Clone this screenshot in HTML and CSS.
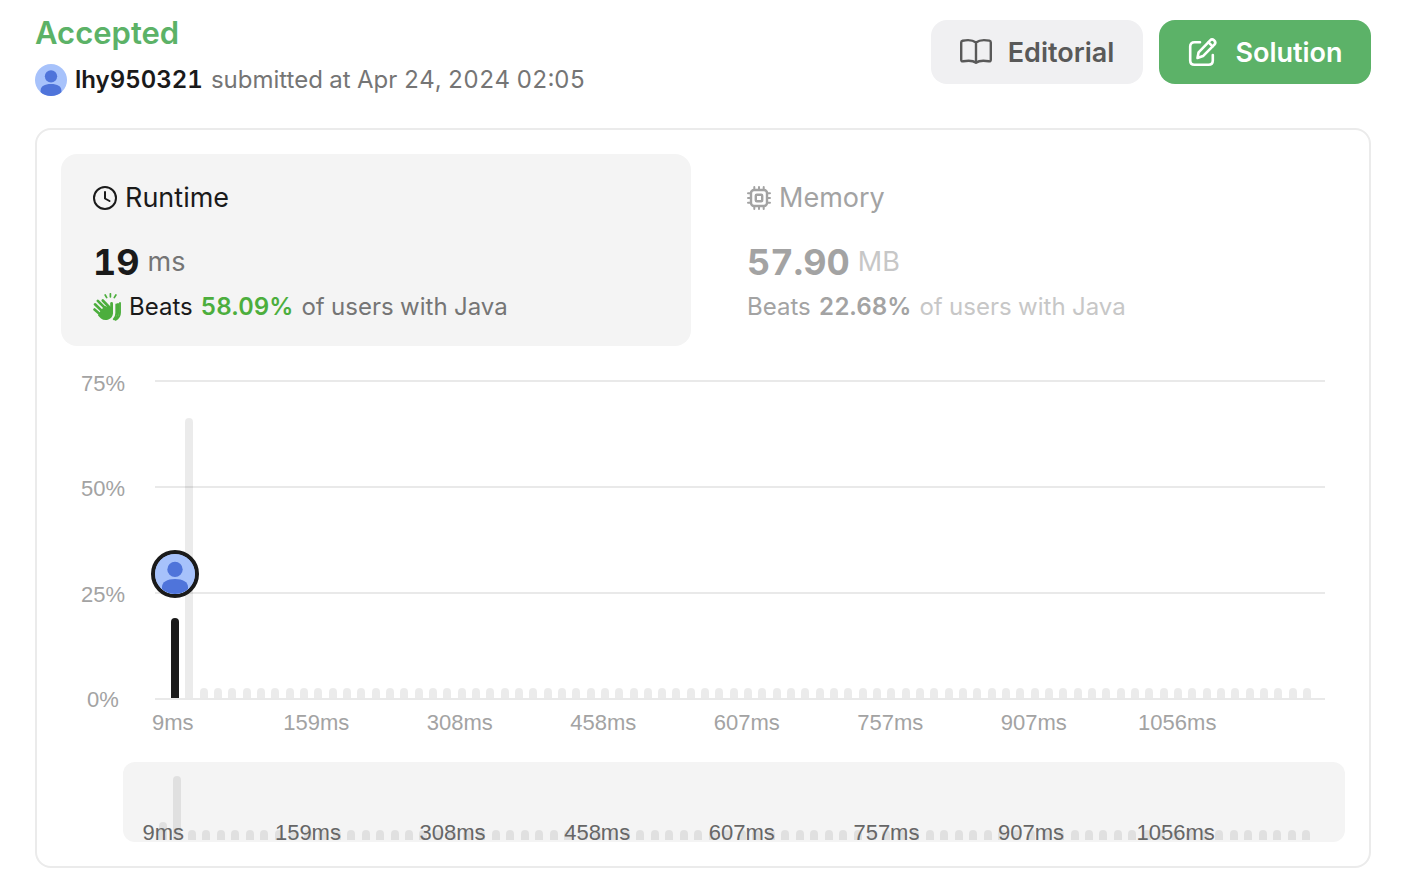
FILE: index.html
```html
<!DOCTYPE html>
<html lang="en">
<head>
<meta charset="utf-8">
<title>Submission result</title>
<link rel="stylesheet" href="styles.css">
</head>
<body>
<svg class="defs" aria-hidden="true">
  <symbol id="person" viewBox="0 0 40 40">
    <circle cx="20" cy="20" r="20" fill="#a7c2fb"/>
    <g fill="#4f74da"><circle cx="20" cy="15.4" r="7.7"/><path d="M7 33c0-5 5-8 13-8s13 3 13 8v2.200A20 20 0 0 1 7 35.200z"/></g>
  </symbol>
</svg>
<main class="page">
  <header class="header">
    <div>
      <h1 class="status">Accepted</h1>
      <div class="author">
        <svg class="avatar" aria-hidden="true"><use href="#person"/></svg>
        <span class="name">lhy950321</span>
        <span class="date">submitted at Apr 24, 2024 02:05</span>
      </div>
    </div>
    <div class="actions">
      <button class="btn" type="button">
        <svg class="btn-icon" viewBox="0 0 32 32" fill="none" stroke="currentColor" stroke-width="2.4" stroke-linejoin="round" aria-hidden="true"><path d="M16 6.500C13 4.100 7 3.800 2.600 4.700Q1.200 5 1.200 6.500V23.500Q1.200 25.700 3.200 25.300C8 24.500 13 24.500 16 26.700C19 24.500 24 24.500 28.800 25.300Q30.800 25.700 30.800 23.500V6.500Q30.800 5 29.400 4.700C25 3.800 19 4.100 16 6.500V26.500"/></svg>
        Editorial
      </button>
      <button class="btn btn-solution" type="button">
        <svg class="btn-icon" viewBox="0 0 32 32" fill="none" stroke="currentColor" stroke-width="2.600" stroke-linecap="round" stroke-linejoin="round" aria-hidden="true"><path d="M13 6.300H7.500Q3.200 6.300 3.200 10.500V24.500Q3.200 28.700 7.500 28.700H21.500Q25.800 28.700 25.800 24.500V19"/><path d="M10.500 22L11.600 16.300L23.200 4.300Q25 2.500 27 4.300Q29.400 6.500 27.400 8.700L16 20.100Z"/><path d="M21.500 6.300L25.600 10.400"/></svg>
        Solution
      </button>
    </div>
  </header>

  <section class="card">
    <div class="metrics">
      <button class="metric metric-active" type="button">
        <span class="metric-title">
          <svg class="metric-icon" viewBox="0 0 24 24" fill="none" stroke="currentColor" stroke-width="2" stroke-linecap="round" stroke-linejoin="round" aria-hidden="true"><circle cx="12" cy="12" r="11"/><path d="M12 6v6.500l4.500 2.500"/></svg>
          Runtime
        </span>
        <span class="metric-value"><strong>19</strong><span class="unit">ms</span></span>
        <span class="metric-rank">
          <svg class="clap" viewBox="0 0 28 28" fill="none" stroke="currentColor" stroke-linecap="round" aria-hidden="true"><g stroke-width="2.600"><path d="M1.500 16.500L9 23M2 11.300L11 20M4.800 7.800L13 16M9.800 7.500L17 15"/><path d="M18.600 10.500V19" stroke-width="2.800"/></g><path d="M8 17L12 13L16.500 14.500L20 16V20.500A7.500 7.500 0 0 1 8 25.500L5 22.500Z" fill="currentColor" stroke="none"/><path d="M23.300 11.500V20Q23.300 23.800 20.800 26.200M27 10V19.500Q27 24.500 22.500 26.800" stroke-width="1.900"/><path d="M25 11V20Q25 24 22.500 26" stroke-width="2"/><path d="M12.200 2l1.500 2.600M17.400.8v3M22.900 2l-1.600 2.600" stroke-width="1.700"/></svg>
          <span>Beats</span><strong class="percent">58.09%</strong><span class="muted">of users with Java</span>
        </span>
      </button>
      <button class="metric metric-idle" type="button">
        <span class="metric-title">
          <svg class="metric-icon" viewBox="0 0 24 24" fill="none" stroke="currentColor" stroke-width="2.400" stroke-linecap="round" aria-hidden="true"><rect x="4" y="4" width="16" height="16" rx="3"/><rect x="8.800" y="8.800" width="6.400" height="6.400" rx="1"/><path d="M7.300 1v3M12 1v3M16.700 1v3M7.300 20v3M12 20v3M16.700 20v3M1 7.300h3M1 12h3M1 16.700h3M20 7.300h3M20 12h3M20 16.700h3" stroke-width="2"/></svg>
          Memory
        </span>
        <span class="metric-value"><strong>57.90</strong><span class="unit">MB</span></span>
        <span class="metric-rank"><span>Beats</span><strong class="percent">22.68%</strong><span class="muted">of users with Java</span></span>
      </button>
    </div>

    <div class="chart">
      <div class="y-axis"><span>75%</span><span>50%</span><span>25%</span><span>0%</span></div>
      <div class="plot">
        <div class="lines"><i></i><i></i><i></i><i></i></div>
        <div class="bars" id="bars"></div>
      </div>
    </div>
    <div class="x-axis"><span>9ms</span><span>159ms</span><span>308ms</span><span>458ms</span><span>607ms</span><span>757ms</span><span>907ms</span><span>1056ms</span></div>

    <div class="brush">
      <div class="bars" id="brush-bars"></div>
      <div class="brush-labels"><span>9ms</span><span>159ms</span><span>308ms</span><span>458ms</span><span>607ms</span><span>757ms</span><span>907ms</span><span>1056ms</span></div>
    </div>
  </section>
</main>
<script src="chart.js"></script>
</body>
</html>
```

FILE: styles.css
```css
* { box-sizing: border-box; }
body {
  margin: 0;
  background: #fff;
  color: #1a1a1a;
  font-family: Inter, "Liberation Sans", sans-serif;
  font-size: 24px;
  font-variant-numeric: tabular-nums;
}
button { border: 0; margin: 0; font: inherit; font-variant-numeric: inherit; color: inherit; text-align: left; cursor: pointer; }
.defs { position: absolute; width: 0; height: 0; }
.page { padding: 13px 47px 26px 35px; }

.header { display: flex; justify-content: space-between; align-items: flex-start; margin-bottom: 32px; }
.status { margin: 0 0 11px; font-size: 31px; line-height: 40px; font-weight: 600; color: #5cb267; }
.author { display: flex; align-items: center; gap: 8px; line-height: 32px; }
.avatar { width: 32px; height: 32px; }
.name { font-weight: 600; }
.date { color: #757575; }
.actions { display: flex; gap: 16px; padding-top: 7px; }
.btn {
  display: flex; align-items: center; justify-content: center; gap: 16px;
  min-width: 212px; height: 64px; padding: 0 24px;
  border-radius: 16px; background: #f0f0f2; color: #595959;
  font-size: 27px; font-weight: 600;
}
.btn-solution { background: #5cb268; color: #fff; }
.btn-icon { width: 32px; height: 32px; flex: none; }

.card { padding: 24px; border: 2px solid #ebebeb; border-radius: 16px; }
.metrics { display: grid; grid-template-columns: 1fr 1fr; gap: 24px; }
.metric { padding: 24px 32px; border-radius: 16px; background: transparent; }
.metric-active { background: #f4f4f4; }
.metric-title { display: flex; align-items: center; gap: 8px; font-size: 27px; line-height: 40px; }
.metric-icon { width: 24px; height: 24px; }
.metric-value { display: flex; align-items: center; gap: 8px; margin-top: 24px; line-height: 40px; }
.metric-value strong { font-size: 36px; font-weight: 700; }
.unit { font-size: 27px; color: #757575; }
.metric-rank { display: flex; align-items: center; gap: 8px; margin-top: 10px; line-height: 30px; }
.clap { width: 28px; height: 28px; color: #4cae3d; }
.percent { font-weight: 600; color: #4cae3d; }
.muted { color: #757575; }
.metric-idle, .metric-idle .percent { color: #a3a3a3; }
.metric-idle .unit, .metric-idle .muted { color: #c7c7c7; }

.chart, .x-axis, .brush { font-family: "Liberation Sans", Arial, sans-serif; font-size: 22px; }
.chart { display: grid; grid-template-columns: 84px 1fr; column-gap: 10px; padding-right: 20px; margin-top: 27px; height: 338px; color: #a3a3a3; }
.y-axis { display: flex; flex-direction: column; justify-content: space-between; text-align: center; line-height: 22px; }
.plot { display: grid; margin: 7px 0 11px; }
.lines, .plot .bars { grid-area: 1 / 1; }
.lines { display: flex; flex-direction: column; justify-content: space-between; }
.lines i { height: 2px; background: #e9e9e9; }
.bars { display: flex; justify-content: space-between; align-items: flex-end; }
.plot .bars { padding: 0 14px 0 16px; margin-bottom: 2px; }
.bar { position: relative; width: 8px; min-height: 10px; border-radius: 4px 4px 0 0; background: rgba(0, 0, 0, .08); }
.bar-mine { background: #1a1a1a; }
.marker { position: absolute; z-index: 1; bottom: calc(100% + 20px); left: -20px; width: 48px; height: 48px; border: 4px solid #1a1a1a; border-radius: 50%; background: #a7c2fb; }
.x-axis, .brush-labels { display: grid; grid-template-columns: repeat(8, 1fr); text-align: center; line-height: 24px; }
.x-axis { margin: 0 96px 0 40px; color: #a3a3a3; }
.brush { position: relative; height: 80px; margin: 27px 0 0 62px; border-radius: 12px; background: #f4f4f4; }
.brush .bars { height: 100%; padding: 14px 34px 2px 36px; }
.brush-labels { position: absolute; left: -32px; right: 97px; bottom: -3px; color: #666; }
```

FILE: chart.js
```js
// Share of submissions per runtime bucket; buckets not listed are near zero.
const buckets = Array(80).fill(0);
buckets[0] = 18.9;
buckets[1] = 66;

function drawBars(id, max, mine) {
  const host = document.getElementById(id);
  buckets.forEach((share, i) => {
    const bar = document.createElement('div');
    bar.className = 'bar';
    bar.style.height = (share / max * 100) + '%';
    if (i === mine) {
      bar.classList.add('bar-mine');
      bar.innerHTML = '<svg class="marker" aria-hidden="true"><use href="#person"/></svg>';
    }
    host.append(bar);
  });
}

drawBars('bars', 75, 0);
drawBars('brush-bars', 66, -1);
```
